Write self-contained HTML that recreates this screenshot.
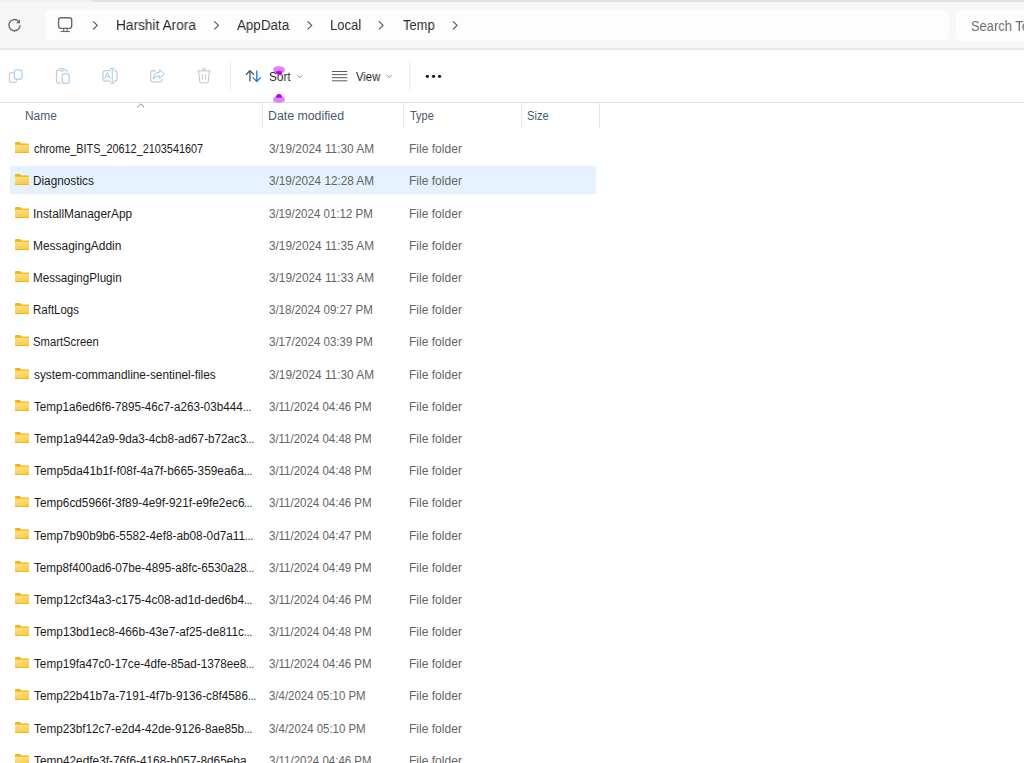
<!DOCTYPE html>
<html><head><meta charset="utf-8">
<style>
*{box-sizing:border-box;margin:0;padding:0}
html,body{width:1024px;height:763px;overflow:hidden;background:#fff;font-family:"Liberation Sans",sans-serif}
svg{position:absolute;overflow:visible}
#top{position:absolute;left:0;top:0;width:1024px;height:48px;background:#f7f7f7}
#tabedge{position:absolute;left:0;top:0;width:1024px;height:1.8px;background:#f1f1f1}
#tabedge2{position:absolute;left:91px;top:0;width:933px;height:2.2px;background:#e3e3e3;border-bottom-left-radius:3px}
#sep1{position:absolute;left:0;top:48px;width:1024px;height:1.6px;background:#e8e8e8}
#crumb{position:absolute;left:44.5px;top:9.8px;width:904px;height:30.4px;background:#fdfdfd;border-radius:5px}
#search{position:absolute;left:956.3px;top:9.8px;width:80px;height:31.2px;background:#fdfdfd;border-radius:5px}
#cmd{position:absolute;left:0;top:49.6px;width:1024px;height:52.4px;background:#fff}
.vsep{position:absolute;width:1px;background:#e8e8e8}
#hline{position:absolute;left:0;top:102px;width:1024px;height:1px;background:#e0e0e0}
.colsep{position:absolute;top:103px;width:1px;height:25px;background:#e8e8e8}
.sel{position:absolute;left:10px;width:586.4px;height:27.4px;background:#e5f2fd;border-radius:2.5px}
.fold{position:absolute;left:15px;width:14px;height:11px}
.tx{position:absolute;white-space:nowrap;transform-origin:0 0}
</style></head><body>
<svg width="0" height="0" style="position:absolute">
  <defs>
    <linearGradient id="fg" x1="0" y1="0" x2="0.35" y2="1">
      <stop offset="0" stop-color="#ffe393"/><stop offset="1" stop-color="#fbca45"/>
    </linearGradient>
    <symbol id="folder" viewBox="0 0 14 11">
      <path d="M0 0.9 Q0 0 0.9 0 H4.6 Q5.2 0 5.6 0.5 L6.4 1.5 H13.2 Q14 1.5 14 2.3 V3.2 H0Z" fill="#f4b516"/>
      <rect x="0" y="2.3" width="14" height="0.9" fill="#f5c232"/>
      <path d="M0 3.0 H14 V10.3 Q14 11 13.3 11 H0.7 Q0 11 0 10.3Z" fill="url(#fg)"/>
      <rect x="0" y="10.1" width="14" height="0.9" fill="#f0b52c"/>
    </symbol>
  </defs>
</svg>
<div id="top">
  <div id="tabedge"></div><div id="tabedge2"></div>
  <div id="crumb"></div>
  <div id="search"></div>
</div>
<div id="sep1"></div>
<div id="cmd"></div>

<!-- refresh -->
<svg style="left:0;top:0" width="40" height="40" viewBox="0 0 40 40">
  <path d="M20.1 25.3 A5.6 5.6 0 1 1 18.3 21.0" fill="none" stroke="#676767" stroke-width="1.3"/>
  <path d="M20.0 19.2 L20.0 23.3 L16.0 23.3 Z" fill="#676767"/>
</svg>
<!-- monitor -->
<svg style="left:0;top:0" width="100" height="40" viewBox="0 0 100 40">
  <rect x="58.6" y="17.7" width="13.1" height="10.6" rx="2.2" fill="none" stroke="#686868" stroke-width="1.35"/>
  <path d="M63.7 28.8 V31.3 M67.1 28.8 V31.3" stroke="#686868" stroke-width="1.05"/>
  <path d="M60.6 31.5 H69.8" stroke="#686868" stroke-width="1.1"/>
</svg>
<!-- breadcrumb chevrons -->
<svg style="left:0;top:0" width="470" height="40" viewBox="0 0 470 40">
  <g fill="none" stroke="#525252" stroke-width="1.1" stroke-linecap="round" stroke-linejoin="round">
    <path d="M93.4 21.6 L97.3 25.4 L93.4 29.2"/>
    <path d="M214.6 21.6 L218.5 25.4 L214.6 29.2"/>
    <path d="M307.9 21.6 L311.8 25.4 L307.9 29.2"/>
    <path d="M379.2 21.6 L383.1 25.4 L379.2 29.2"/>
    <path d="M453.2 21.6 L457.1 25.4 L453.2 29.2"/>
  </g>
</svg>

<!-- command bar icons -->
<svg style="left:0;top:0" width="470" height="100" viewBox="0 0 470 100">
  <!-- copy -->
  <path d="M13.6 72.6 H11.6 Q9.4 72.6 9.4 74.8 V80.1 Q9.4 82.3 11.6 82.3 H14.6 Q16.6 82.3 16.9 80.4" fill="none" stroke="#cdcdcd" stroke-width="1.3"/>
  <rect x="14.3" y="69.85" width="7.65" height="9.4" rx="2.3" fill="none" stroke="#b0d4f1" stroke-width="1.3"/>
  <!-- paste -->
  <path d="M61.1 83.2 H58.6 Q56.5 83.2 56.5 81.1 V71.9 Q56.5 69.8 58.6 69.8 H59.5 M64 69.8 H65.1 Q67.2 69.8 67.2 71.9 V72.3" fill="none" stroke="#cdcdcd" stroke-width="1.3"/>
  <rect x="59.6" y="68.6" width="4.5" height="2.3" rx="1.1" fill="none" stroke="#cdcdcd" stroke-width="1.2"/>
  <rect x="62.35" y="73.65" width="6.9" height="9.7" rx="2.2" fill="none" stroke="#b0d4f1" stroke-width="1.3"/>
  <!-- rename -->
  <path d="M110.6 70.65 H105.6 Q102.85 70.65 102.85 73.4 V78.4 Q102.85 81.15 105.6 81.15 H110.6 M114 70.65 H114.4 Q117.15 70.65 117.15 73.4 V78.4 Q117.15 81.15 114.4 81.15 H114" fill="none" stroke="#cdcdcd" stroke-width="1.3"/>
  <path d="M112.3 68.3 V83.6 M110.1 68.7 H114.6 M110.1 83.2 H114.6" fill="none" stroke="#aed3f1" stroke-width="1.2"/>
  <path d="M104.6 78.5 L107.4 72.6 L110.2 78.5 M105.6 76.5 H109.2" fill="none" stroke="#aed3f1" stroke-width="1.1"/>
  <!-- share -->
  <path d="M155.4 70.75 H153 Q150.65 70.75 150.65 73.1 V79.6 Q150.65 81.95 153 81.95 H159.8 Q162.15 81.95 162.15 79.6 V79.1" fill="none" stroke="#cdcdcd" stroke-width="1.3"/>
  <path d="M159.6 69.7 L164.2 74.1 L159.6 78.3 V75.9 Q155.8 75.8 153.3 78.6 Q153.9 72.6 159.6 72.1 Z" fill="none" stroke="#aed3f1" stroke-width="1.1" stroke-linejoin="round"/>
  <!-- trash -->
  <path d="M197.4 70.9 H210.6 M198.6 71 L199.8 81.5 Q200 82.9 201.4 82.9 H206.6 Q208 82.9 208.2 81.5 L209.4 71 M202.1 70.8 Q202.3 68.7 203.9 68.7 Q205.5 68.7 205.7 70.8 M202.4 74.4 V79.6 M205.4 74.4 V79.6" fill="none" stroke="#cdcdcd" stroke-width="1.2"/>
  <!-- separator -->
  <rect x="230" y="61" width="1" height="30.3" fill="#ebebeb"/>
  <!-- sort -->
  <path d="M249.9 70.6 V81.6 M245.9 74.7 L249.9 70.6 L253.9 74.7" fill="none" stroke="#555555" stroke-width="1.35" stroke-linejoin="round"/>
  <path d="M256.8 70.4 V81.4 M252.8 77.4 L256.8 81.5 L260.8 77.4" fill="none" stroke="#1e7fd6" stroke-width="1.35" stroke-linejoin="round"/>
  <path d="M297.3 75.2 L299.8 77.7 L302.3 75.2" fill="none" stroke="#7a7a7a" stroke-width="0.9"/>
  <!-- view -->
  <path d="M332 71.5 H347.3 M332 74.6 H347.3 M332 77.7 H347.3 M332 80.8 H347.3" fill="none" stroke="#5a5a5a" stroke-width="1"/>
  <path d="M386.9 75.1 L389.3 77.5 L391.7 75.1" fill="none" stroke="#7a7a7a" stroke-width="0.9"/>
  <rect x="409.3" y="61" width="1" height="30.3" fill="#ebebeb"/>
  <!-- more -->
  <circle cx="427.4" cy="76.3" r="1.6" fill="#1a1a1a"/>
  <circle cx="433.5" cy="76.3" r="1.6" fill="#1a1a1a"/>
  <circle cx="439.55" cy="76.3" r="1.6" fill="#1a1a1a"/>
</svg>

<div id="hline"></div>
<div class="colsep" style="left:262px"></div>
<div class="colsep" style="left:403px"></div>
<div class="colsep" style="left:521px"></div>
<div class="colsep" style="left:599px"></div>
<!-- sort caret -->
<svg style="left:0;top:0" width="160" height="120" viewBox="0 0 160 120">
  <path d="M137.3 107.3 L140.7 104 L144.1 107.3" fill="none" stroke="#707070" stroke-width="0.9"/>
</svg>
<div class="sel" style="top:166.39px"></div>
<svg class="fold" style="top:142.20px"><use href="#folder"/></svg>
<div class="tx" style="left:34.00px;top:142.25px;font-size:12px;line-height:14px;transform:scaleX(0.9053);color:#1b1b1b">chrome_BITS_20612_2103541607</div>
<div class="tx" style="left:268.70px;top:142.25px;font-size:12px;line-height:14px;transform:scaleX(0.9858);color:#646464">3/19/2024 11:30 AM</div>
<div class="tx" style="left:408.70px;top:142.25px;font-size:12px;line-height:14px;transform:scaleX(1.0038);color:#646464">File folder</div>
<svg class="fold" style="top:174.39px"><use href="#folder"/></svg>
<div class="tx" style="left:33.02px;top:174.44px;font-size:12px;line-height:14px;transform:scaleX(0.9803);color:#1b1b1b">Diagnostics</div>
<div class="tx" style="left:268.70px;top:174.44px;font-size:12px;line-height:14px;transform:scaleX(0.9766);color:#646464">3/19/2024 12:28 AM</div>
<div class="tx" style="left:408.70px;top:174.44px;font-size:12px;line-height:14px;transform:scaleX(1.0038);color:#646464">File folder</div>
<svg class="fold" style="top:206.58px"><use href="#folder"/></svg>
<div class="tx" style="left:33.01px;top:206.63px;font-size:12px;line-height:14px;transform:scaleX(0.9909);color:#1b1b1b">InstallManagerApp</div>
<div class="tx" style="left:268.70px;top:206.63px;font-size:12px;line-height:14px;transform:scaleX(0.9607);color:#646464">3/19/2024 01:12 PM</div>
<div class="tx" style="left:408.70px;top:206.63px;font-size:12px;line-height:14px;transform:scaleX(1.0038);color:#646464">File folder</div>
<svg class="fold" style="top:238.77px"><use href="#folder"/></svg>
<div class="tx" style="left:33.00px;top:238.82px;font-size:12px;line-height:14px;transform:scaleX(0.9966);color:#1b1b1b">MessagingAddin</div>
<div class="tx" style="left:268.70px;top:238.82px;font-size:12px;line-height:14px;transform:scaleX(0.9858);color:#646464">3/19/2024 11:35 AM</div>
<div class="tx" style="left:408.70px;top:238.82px;font-size:12px;line-height:14px;transform:scaleX(1.0038);color:#646464">File folder</div>
<svg class="fold" style="top:270.96px"><use href="#folder"/></svg>
<div class="tx" style="left:33.03px;top:271.01px;font-size:12px;line-height:14px;transform:scaleX(0.9700);color:#1b1b1b">MessagingPlugin</div>
<div class="tx" style="left:268.70px;top:271.01px;font-size:12px;line-height:14px;transform:scaleX(0.9858);color:#646464">3/19/2024 11:33 AM</div>
<div class="tx" style="left:408.70px;top:271.01px;font-size:12px;line-height:14px;transform:scaleX(1.0038);color:#646464">File folder</div>
<svg class="fold" style="top:303.15px"><use href="#folder"/></svg>
<div class="tx" style="left:33.04px;top:303.20px;font-size:12px;line-height:14px;transform:scaleX(0.9574);color:#1b1b1b">RaftLogs</div>
<div class="tx" style="left:268.70px;top:303.20px;font-size:12px;line-height:14px;transform:scaleX(0.9607);color:#646464">3/18/2024 09:27 PM</div>
<div class="tx" style="left:408.70px;top:303.20px;font-size:12px;line-height:14px;transform:scaleX(1.0038);color:#646464">File folder</div>
<svg class="fold" style="top:335.34px"><use href="#folder"/></svg>
<div class="tx" style="left:33.06px;top:335.39px;font-size:12px;line-height:14px;transform:scaleX(0.9377);color:#1b1b1b">SmartScreen</div>
<div class="tx" style="left:268.70px;top:335.39px;font-size:12px;line-height:14px;transform:scaleX(0.9607);color:#646464">3/17/2024 03:39 PM</div>
<div class="tx" style="left:408.70px;top:335.39px;font-size:12px;line-height:14px;transform:scaleX(1.0038);color:#646464">File folder</div>
<svg class="fold" style="top:367.53px"><use href="#folder"/></svg>
<div class="tx" style="left:34.00px;top:367.58px;font-size:12px;line-height:14px;transform:scaleX(0.9875);color:#1b1b1b">system-commandline-sentinel-files</div>
<div class="tx" style="left:268.70px;top:367.58px;font-size:12px;line-height:14px;transform:scaleX(0.9858);color:#646464">3/19/2024 11:30 AM</div>
<div class="tx" style="left:408.70px;top:367.58px;font-size:12px;line-height:14px;transform:scaleX(1.0038);color:#646464">File folder</div>
<svg class="fold" style="top:399.72px"><use href="#folder"/></svg>
<div class="tx" style="left:34.00px;top:399.77px;font-size:12px;line-height:14px;transform:scaleX(0.9712);color:#1b1b1b">Temp1a6ed6f6-7895-46c7-a263-03b444</div>
<div class="tx" style="left:242.79px;top:399.77px;font-size:12px;line-height:14px;transform:scaleX(0.8125);color:#1b1b1b">...</div>
<div class="tx" style="left:268.70px;top:399.77px;font-size:12px;line-height:14px;transform:scaleX(0.9570);color:#646464">3/11/2024 04:46 PM</div>
<div class="tx" style="left:408.70px;top:399.77px;font-size:12px;line-height:14px;transform:scaleX(1.0038);color:#646464">File folder</div>
<svg class="fold" style="top:431.91px"><use href="#folder"/></svg>
<div class="tx" style="left:34.00px;top:431.96px;font-size:12px;line-height:14px;transform:scaleX(0.9770);color:#1b1b1b">Temp1a9442a9-9da3-4cb8-ad67-b72ac3</div>
<div class="tx" style="left:245.99px;top:431.96px;font-size:12px;line-height:14px;transform:scaleX(0.8125);color:#1b1b1b">...</div>
<div class="tx" style="left:268.70px;top:431.96px;font-size:12px;line-height:14px;transform:scaleX(0.9570);color:#646464">3/11/2024 04:48 PM</div>
<div class="tx" style="left:408.70px;top:431.96px;font-size:12px;line-height:14px;transform:scaleX(1.0038);color:#646464">File folder</div>
<svg class="fold" style="top:464.10px"><use href="#folder"/></svg>
<div class="tx" style="left:34.00px;top:464.15px;font-size:12px;line-height:14px;transform:scaleX(0.9887);color:#1b1b1b">Temp5da41b1f-f08f-4a7f-b665-359ea6a</div>
<div class="tx" style="left:243.59px;top:464.15px;font-size:12px;line-height:14px;transform:scaleX(0.8125);color:#1b1b1b">...</div>
<div class="tx" style="left:268.70px;top:464.15px;font-size:12px;line-height:14px;transform:scaleX(0.9570);color:#646464">3/11/2024 04:48 PM</div>
<div class="tx" style="left:408.70px;top:464.15px;font-size:12px;line-height:14px;transform:scaleX(1.0038);color:#646464">File folder</div>
<svg class="fold" style="top:496.29px"><use href="#folder"/></svg>
<div class="tx" style="left:34.00px;top:496.34px;font-size:12px;line-height:14px;transform:scaleX(0.9827);color:#1b1b1b">Temp6cd5966f-3f89-4e9f-921f-e9fe2ec6</div>
<div class="tx" style="left:244.29px;top:496.34px;font-size:12px;line-height:14px;transform:scaleX(0.8125);color:#1b1b1b">...</div>
<div class="tx" style="left:268.70px;top:496.34px;font-size:12px;line-height:14px;transform:scaleX(0.9570);color:#646464">3/11/2024 04:46 PM</div>
<div class="tx" style="left:408.70px;top:496.34px;font-size:12px;line-height:14px;transform:scaleX(1.0038);color:#646464">File folder</div>
<svg class="fold" style="top:528.48px"><use href="#folder"/></svg>
<div class="tx" style="left:34.00px;top:528.53px;font-size:12px;line-height:14px;transform:scaleX(0.9837);color:#1b1b1b">Temp7b90b9b6-5582-4ef8-ab08-0d7a11</div>
<div class="tx" style="left:245.49px;top:528.53px;font-size:12px;line-height:14px;transform:scaleX(0.8125);color:#1b1b1b">...</div>
<div class="tx" style="left:268.70px;top:528.53px;font-size:12px;line-height:14px;transform:scaleX(0.9570);color:#646464">3/11/2024 04:47 PM</div>
<div class="tx" style="left:408.70px;top:528.53px;font-size:12px;line-height:14px;transform:scaleX(1.0038);color:#646464">File folder</div>
<svg class="fold" style="top:560.67px"><use href="#folder"/></svg>
<div class="tx" style="left:34.00px;top:560.72px;font-size:12px;line-height:14px;transform:scaleX(0.9748);color:#1b1b1b">Temp8f400ad6-07be-4895-a8fc-6530a28</div>
<div class="tx" style="left:246.49px;top:560.72px;font-size:12px;line-height:14px;transform:scaleX(0.8125);color:#1b1b1b">...</div>
<div class="tx" style="left:268.70px;top:560.72px;font-size:12px;line-height:14px;transform:scaleX(0.9570);color:#646464">3/11/2024 04:49 PM</div>
<div class="tx" style="left:408.70px;top:560.72px;font-size:12px;line-height:14px;transform:scaleX(1.0038);color:#646464">File folder</div>
<svg class="fold" style="top:592.86px"><use href="#folder"/></svg>
<div class="tx" style="left:34.00px;top:592.91px;font-size:12px;line-height:14px;transform:scaleX(0.9845);color:#1b1b1b">Temp12cf34a3-c175-4c08-ad1d-ded6b4</div>
<div class="tx" style="left:243.69px;top:592.91px;font-size:12px;line-height:14px;transform:scaleX(0.8125);color:#1b1b1b">...</div>
<div class="tx" style="left:268.70px;top:592.91px;font-size:12px;line-height:14px;transform:scaleX(0.9570);color:#646464">3/11/2024 04:46 PM</div>
<div class="tx" style="left:408.70px;top:592.91px;font-size:12px;line-height:14px;transform:scaleX(1.0038);color:#646464">File folder</div>
<svg class="fold" style="top:625.05px"><use href="#folder"/></svg>
<div class="tx" style="left:34.00px;top:625.10px;font-size:12px;line-height:14px;transform:scaleX(0.9845);color:#1b1b1b">Temp13bd1ec8-466b-43e7-af25-de811c</div>
<div class="tx" style="left:243.69px;top:625.10px;font-size:12px;line-height:14px;transform:scaleX(0.8125);color:#1b1b1b">...</div>
<div class="tx" style="left:268.70px;top:625.10px;font-size:12px;line-height:14px;transform:scaleX(0.9570);color:#646464">3/11/2024 04:48 PM</div>
<div class="tx" style="left:408.70px;top:625.10px;font-size:12px;line-height:14px;transform:scaleX(1.0038);color:#646464">File folder</div>
<svg class="fold" style="top:657.24px"><use href="#folder"/></svg>
<div class="tx" style="left:34.00px;top:657.29px;font-size:12px;line-height:14px;transform:scaleX(0.9765);color:#1b1b1b">Temp19fa47c0-17ce-4dfe-85ad-1378ee8</div>
<div class="tx" style="left:245.89px;top:657.29px;font-size:12px;line-height:14px;transform:scaleX(0.8125);color:#1b1b1b">...</div>
<div class="tx" style="left:268.70px;top:657.29px;font-size:12px;line-height:14px;transform:scaleX(0.9570);color:#646464">3/11/2024 04:46 PM</div>
<div class="tx" style="left:408.70px;top:657.29px;font-size:12px;line-height:14px;transform:scaleX(1.0038);color:#646464">File folder</div>
<svg class="fold" style="top:689.43px"><use href="#folder"/></svg>
<div class="tx" style="left:34.00px;top:689.48px;font-size:12px;line-height:14px;transform:scaleX(0.9807);color:#1b1b1b">Temp22b41b7a-7191-4f7b-9136-c8f4586</div>
<div class="tx" style="left:247.79px;top:689.48px;font-size:12px;line-height:14px;transform:scaleX(0.8125);color:#1b1b1b">...</div>
<div class="tx" style="left:268.70px;top:689.48px;font-size:12px;line-height:14px;transform:scaleX(0.9525);color:#646464">3/4/2024 05:10 PM</div>
<div class="tx" style="left:408.70px;top:689.48px;font-size:12px;line-height:14px;transform:scaleX(1.0038);color:#646464">File folder</div>
<svg class="fold" style="top:721.62px"><use href="#folder"/></svg>
<div class="tx" style="left:34.00px;top:721.67px;font-size:12px;line-height:14px;transform:scaleX(0.9781);color:#1b1b1b">Temp23bf12c7-e2d4-42de-9126-8ae85b</div>
<div class="tx" style="left:244.29px;top:721.67px;font-size:12px;line-height:14px;transform:scaleX(0.8125);color:#1b1b1b">...</div>
<div class="tx" style="left:268.70px;top:721.67px;font-size:12px;line-height:14px;transform:scaleX(0.9525);color:#646464">3/4/2024 05:10 PM</div>
<div class="tx" style="left:408.70px;top:721.67px;font-size:12px;line-height:14px;transform:scaleX(1.0038);color:#646464">File folder</div>
<svg class="fold" style="top:753.81px"><use href="#folder"/></svg>
<div class="tx" style="left:34.00px;top:753.86px;font-size:12px;line-height:14px;transform:scaleX(0.9861);color:#1b1b1b">Temp42edfe3f-76f6-4168-b057-8d65eba</div>
<div class="tx" style="left:268.70px;top:753.86px;font-size:12px;line-height:14px;transform:scaleX(0.9570);color:#646464">3/11/2024 04:46 PM</div>
<div class="tx" style="left:408.70px;top:753.86px;font-size:12px;line-height:14px;transform:scaleX(1.0038);color:#646464">File folder</div>
<div class="tx" style="left:24.61px;top:108.90px;font-size:12px;line-height:14px;transform:scaleX(0.9935);color:#4a5a70">Name</div>
<div class="tx" style="left:267.97px;top:108.90px;font-size:12px;line-height:14px;transform:scaleX(1.0274);color:#4a5a70">Date modified</div>
<div class="tx" style="left:410.00px;top:108.90px;font-size:12px;line-height:14px;transform:scaleX(0.9115);color:#4a5a70">Type</div>
<div class="tx" style="left:526.57px;top:108.90px;font-size:12px;line-height:14px;transform:scaleX(0.9318);color:#4a5a70">Size</div>
<div class="tx" style="left:268.62px;top:69.80px;font-size:12px;line-height:14px;transform:scaleX(0.9762);color:#1c1c1c;will-change:transform">Sort</div>
<div class="tx" style="left:355.80px;top:69.70px;font-size:12px;line-height:14px;transform:scaleX(0.9385);color:#1c1c1c;will-change:transform">View</div>
<div class="tx" style="left:115.92px;top:16.70px;font-size:14px;line-height:16px;transform:scaleX(0.9790);color:#2a2a2a;will-change:transform">Harshit Arora</div>
<div class="tx" style="left:237.10px;top:16.70px;font-size:14px;line-height:16px;transform:scaleX(0.9582);color:#2a2a2a;will-change:transform">AppData</div>
<div class="tx" style="left:329.96px;top:16.70px;font-size:14px;line-height:16px;transform:scaleX(0.9375);color:#2a2a2a;will-change:transform">Local</div>
<div class="tx" style="left:402.60px;top:16.70px;font-size:14px;line-height:16px;transform:scaleX(0.9265);color:#2a2a2a;will-change:transform">Temp</div>
<div class="tx" style="left:970.78px;top:17.50px;font-size:14px;line-height:16px;transform:scaleX(0.9233);color:#6a6a6a;will-change:transform">Search Temp</div>
<!-- markers -->
<svg style="left:0;top:0" width="300" height="110" viewBox="0 0 300 110">
  <path d="M273.1 69.9 Q273.1 66.2 279 66.2 Q284.9 66.2 284.9 69.9 Q284.9 72 282.4 72.5 L279 74.9 L275.6 72.5 Q273.1 72 273.1 69.9Z" fill="#dd83fb"/>
  <path d="M275.5 71.6 Q279 70.3 282.5 71.6 Q282 74.9 279 74.9 Q276 74.9 275.5 71.6Z" fill="#b900f4"/>
  <path d="M273.1 99.6 Q273.1 102.9 279 102.9 Q284.9 102.9 284.9 99.6 Q284.9 97.2 282 96.5 L279 94 L276 96.5 Q273.1 97.2 273.1 99.6Z" fill="#dd83fb"/>
  <path d="M275.8 97.3 Q276.3 93.9 279 93.9 Q281.7 93.9 282.2 97.3 Q279 98.3 275.8 97.3Z" fill="#b900f4"/>
</svg>
</body></html>
